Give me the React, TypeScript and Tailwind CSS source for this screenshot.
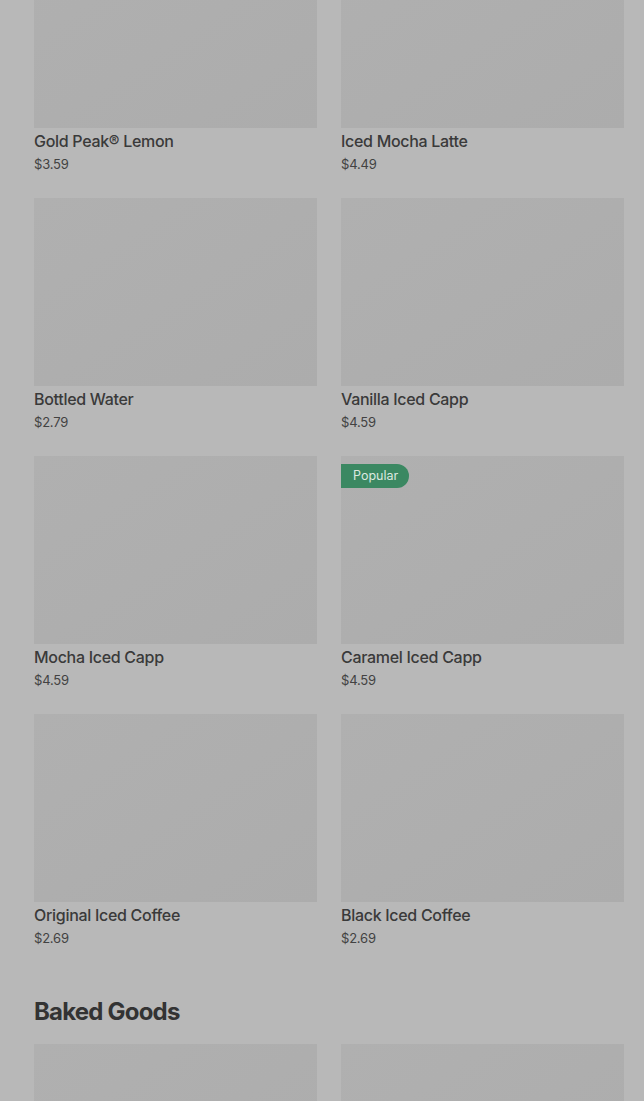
import React from 'react';

interface Item {
  name: string;
  price: string;
  badge?: string;
}

const drinks: Item[] = [
  { name: 'Gold Peak® Lemon', price: '$3.59' },
  { name: 'Iced Mocha Latte', price: '$4.49' },
  { name: 'Bottled Water', price: '$2.79' },
  { name: 'Vanilla Iced Capp', price: '$4.59' },
  { name: 'Mocha Iced Capp', price: '$4.59' },
  { name: 'Caramel Iced Capp', price: '$4.59', badge: 'Popular' },
  { name: 'Original Iced Coffee', price: '$2.69' },
  { name: 'Black Iced Coffee', price: '$2.69' },
];

const ItemCard: React.FC<{ item: Item }> = ({ item }) => (
  <div className="flex flex-col">
    <div className="relative h-[188px] bg-gradient-to-br from-[#b0b0b0] to-[#acacac]">
      {item.badge && (
        <span className="absolute left-0 top-2 h-6 pl-3 pr-[11px] flex items-center rounded-l-[3px] rounded-r-full bg-[#3b8862] text-[12.5px] text-[#dbe8e0]">
          {item.badge}
        </span>
      )}
    </div>
    <div className="mt-px text-[16px] leading-6 font-medium tracking-[-0.3px] text-[#3a3a3a]">{item.name}</div>
    <div className="mt-px text-[13px] leading-5 tracking-[-0.2px] text-[#424242]">{item.price}</div>
  </div>
);

export default function App() {
  return (
    <div
      className="min-h-[1101px] bg-[#b8b8b8] overflow-hidden"
      style={{ fontFamily: 'Inter, "Noto Sans", sans-serif' }}
    >
      <div className="pl-[34px] pr-[20px] mt-[-60px]">
        <div className="grid grid-cols-2 gap-x-6 gap-y-6">
          {drinks.map((d) => (
            <ItemCard key={d.name} item={d} />
          ))}
        </div>
        <h2 className="mt-[48px] text-[24px] leading-8 font-bold tracking-[-0.8px] text-[#333333]">
          Baked Goods
        </h2>
        <div className="mt-4 grid grid-cols-2 gap-x-6">
          <div className="h-[188px] bg-gradient-to-br from-[#b0b0b0] to-[#acacac]" />
          <div className="h-[188px] bg-gradient-to-br from-[#b0b0b0] to-[#acacac]" />
        </div>
      </div>
    </div>
  );
}
